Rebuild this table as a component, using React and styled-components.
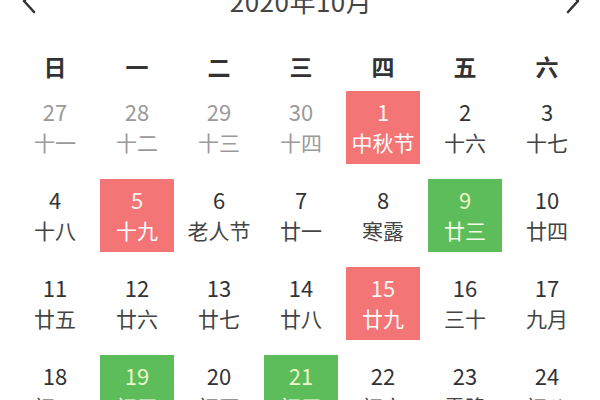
import React from "react";
import styled, { createGlobalStyle } from "styled-components";

const Global = createGlobalStyle`
  html, body { margin: 0; padding: 0; background: #fff; overflow: hidden; }
  body { font-family: "Noto Sans CJK SC", "Noto Sans", sans-serif; }
`;

const Page = styled.div`
  width: 600px;
  height: 400px;
  overflow: hidden;
  padding-left: 18px;
  box-sizing: border-box;
`;

const Header = styled.div`
  display: flex;
  align-items: center;
  justify-content: space-between;
  height: 30px;
  margin-top: -14px;
  width: 566px;
  padding: 0 4px 0 4px;
  box-sizing: border-box;
`;

const Title = styled.div`
  font-size: 26px;
  line-height: 30px;
  color: #444;
  letter-spacing: 0.5px;
`;

const Arrow = styled.svg`
  width: 14px;
  height: 26px;
  flex: none;
`;

const WeekRow = styled.div`
  display: grid;
  grid-template-columns: repeat(7, 74px);
  column-gap: 8px;
  height: 50px;
  margin-top: 25px;
  align-items: center;
`;

const WeekLabel = styled.div`
  text-align: center;
  font-size: 23px;
  font-weight: 700;
  color: #333;
  line-height: 50px;
`;

const Grid = styled.div`
  display: grid;
  grid-template-columns: repeat(7, 74px);
  grid-auto-rows: 73px;
  column-gap: 8px;
  row-gap: 15px;
`;

const palette = {
  red: { bg: "#f47575", num: "#fff3f0", sub: "#ffffff" },
  green: { bg: "#5cbd5a", num: "#eaf8c8", sub: "#f2fbe6" },
};

const Cell = styled.div`
  display: flex;
  flex-direction: column;
  align-items: center;
  padding-top: 5px;
  box-sizing: border-box;
  background: ${(p) => (p.$mark ? palette[p.$mark].bg : "transparent")};
`;

const Num = styled.div`
  font-size: 22px;
  line-height: 31px;
  color: ${(p) => (p.$mark ? palette[p.$mark].num : p.$muted ? "#9a9a9a" : "#333")};
`;

const Lunar = styled.div`
  font-size: 21px;
  line-height: 31px;
  white-space: nowrap;
  color: ${(p) => (p.$mark ? palette[p.$mark].sub : p.$muted ? "#9a9a9a" : "#444")};
`;

const weeks = ["日", "一", "二", "三", "四", "五", "六"];

const days = [
  ["27", "十一", true], ["28", "十二", true], ["29", "十三", true], ["30", "十四", true],
  ["1", "中秋节", false, "red"], ["2", "十六"], ["3", "十七"],
  ["4", "十八"], ["5", "十九", false, "red"], ["6", "老人节"], ["7", "廿一"],
  ["8", "寒露"], ["9", "廿三", false, "green"], ["10", "廿四"],
  ["11", "廿五"], ["12", "廿六"], ["13", "廿七"], ["14", "廿八"],
  ["15", "廿九", false, "red"], ["16", "三十"], ["17", "九月"],
  ["18", "初二"], ["19", "初三", false, "green"], ["20", "初四"], ["21", "初五", false, "green"],
  ["22", "初六"], ["23", "霜降"], ["24", "初八"],
];

export default function App() {
  return (
    <>
      <Global />
      <Page>
        <Header>
          <Arrow viewBox="0 0 14 26">
            <path d="M12 2 L2 13 L12 24" fill="none" stroke="#333" strokeWidth="2.6" strokeLinecap="round" strokeLinejoin="round" />
          </Arrow>
          <Title>2020年10月</Title>
          <Arrow viewBox="0 0 14 26">
            <path d="M2 2 L12 13 L2 24" fill="none" stroke="#333" strokeWidth="2.6" strokeLinecap="round" strokeLinejoin="round" />
          </Arrow>
        </Header>
        <WeekRow>
          {weeks.map((w) => (
            <WeekLabel key={w}>{w}</WeekLabel>
          ))}
        </WeekRow>
        <Grid>
          {days.map(([n, l, muted, mark], i) => (
            <Cell key={i} $mark={mark}>
              <Num $muted={muted} $mark={mark}>{n}</Num>
              <Lunar $muted={muted} $mark={mark}>{l}</Lunar>
            </Cell>
          ))}
        </Grid>
      </Page>
    </>
  );
}
